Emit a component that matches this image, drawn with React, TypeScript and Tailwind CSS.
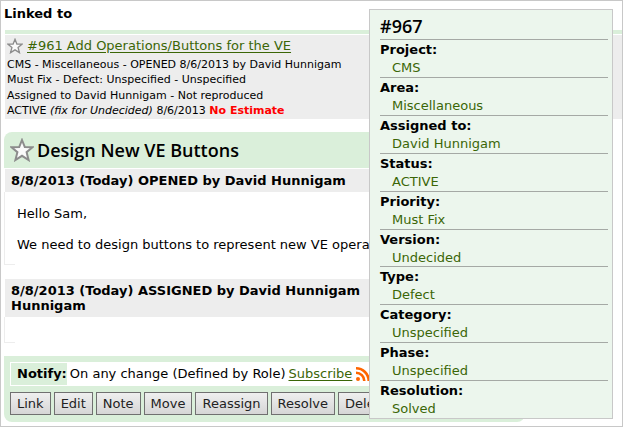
import type { ReactNode } from 'react';

const details = [
  { label: 'Project', value: 'CMS' },
  { label: 'Area', value: 'Miscellaneous' },
  { label: 'Assigned to', value: 'David Hunnigam' },
  { label: 'Status', value: 'ACTIVE' },
  { label: 'Priority', value: 'Must Fix' },
  { label: 'Version', value: 'Undecided' },
  { label: 'Type', value: 'Defect' },
  { label: 'Category', value: 'Unspecified' },
  { label: 'Phase', value: 'Unspecified' },
  { label: 'Resolution', value: 'Solved' },
];

const actions = ['Link', 'Edit', 'Note', 'Move', 'Reassign', 'Resolve', 'Delete'];

const Star = ({ className }: { className: string }) => (
  <svg viewBox="0 0 24 24" className={className} fill="#fafafa" stroke="#8c8c8c" strokeWidth="2" aria-hidden="true">
    <path d="M12 2 L14.8 9 L22.5 9.3 L16.6 14.2 L18.6 22 L12 17.8 L5.4 22 L7.4 14.2 L1.5 9.3 L9.2 9 Z" />
  </svg>
);

const Rss = () => (
  <svg viewBox="0 0 14 14" className="size-3.5 shrink-0" fill="none" stroke="#ff6600" aria-hidden="true">
    <circle cx="2" cy="12" r="2" fill="#ff6600" stroke="none" />
    <path d="M0 5.7 A8.3 8.3 0 0 1 8.3 14" strokeWidth="2.6" />
    <path d="M0 1.3 A12.7 12.7 0 0 1 12.7 14" strokeWidth="2.6" />
  </svg>
);

const Event = ({ title, children }: { title: ReactNode; children?: ReactNode }) => (
  <article>
    <h3 className="ml-px bg-[#ededed] px-1.5 py-1 text-[13px] leading-[15px] font-bold">{title}</h3>
    <div className="min-h-[25px] border-l border-[#ededed] px-3">{children}</div>
    <div className="h-px w-[11px] bg-[#ededed]" />
  </article>
);

const LinkedCase = () => (
  <section>
    <h2 className="px-[3px] pt-[5px] text-[13px] leading-4 font-bold">Linked to</h2>
    <div className="mt-2 ml-1 h-1 bg-[#daefda]" />
    <div className="mt-px ml-1 bg-[#ededed] px-0.5 pt-[3px] pb-px text-[11px] leading-[15px]">
      <div className="mb-[3px] flex items-center gap-1">
        <Star className="size-4 shrink-0" />
        <a href="#961" className="text-[13px] leading-4 text-[#3b6607] underline underline-offset-2">
          #961 Add Operations/Buttons for the VE
        </a>
      </div>
      <p>CMS - Miscellaneous - OPENED 8/6/2013 by David Hunnigam</p>
      <p>Must Fix - Defect: Unspecified - Unspecified</p>
      <p className="pt-px">Assigned to David Hunnigam - Not reproduced</p>
      <p>
        ACTIVE <i>(fix for Undecided)</i> 8/6/2013 <b className="text-[#ff0000]">No Estimate</b>
      </p>
    </div>
  </section>
);

const CaseDetails = () => (
  <aside className="absolute top-2 right-[9px] bottom-[7px] flex w-[244px] flex-col border border-[#c8c8c8] bg-[#ecf6ed] pr-1 pl-2.5 text-[13px]">
    <h2 className="pt-1 pb-px font-['Open_Sans',sans-serif] text-lg leading-6 font-semibold">#967</h2>
    <dl className="flex flex-1 flex-col">
      {details.map(({ label, value }) => (
        <div key={label} className="flex-1 border-t border-[#a5a9a5] pt-px leading-[17px]">
          <dt className="font-bold">{label}:</dt>
          <dd className="pt-px pl-3 text-[#3b6607]">{value}</dd>
        </div>
      ))}
    </dl>
  </aside>
);

export default function App() {
  return (
    <main className="relative min-h-screen overflow-hidden border border-[#c8c8c8] bg-white font-['Verdana','DejaVu_Sans',sans-serif] text-black">
      <LinkedCase />

      <section className="mt-[13px] ml-[3px] max-w-[521px]">
        <header className="mb-px flex h-9 items-center gap-[3px] rounded-t-lg bg-[#daefda] pl-1.5">
          <Star className="size-6 shrink-0" />
          <h2 className="font-['Open_Sans',sans-serif] text-lg leading-6 font-semibold">Design New VE Buttons</h2>
        </header>

        <Event title="8/8/2013 (Today) OPENED by David Hunnigam">
          <div className="space-y-4 pt-3.5 pb-3 text-[13px] leading-[15px]">
            <p>Hello Sam,</p>
            <p className="whitespace-nowrap">We need to design buttons to represent new VE operations.</p>
          </div>
        </Event>

        <div className="pt-3.5">
          <Event
            title={
              <>
                8/8/2013 (Today) ASSIGNED by David Hunnigam
                <br />
                Hunnigam
              </>
            }
          />
        </div>

        <footer className="mt-[13px] rounded-b-lg bg-[#daefda] px-1.5 pt-1.5 pb-[7px] text-[13px]">
          <div className="flex h-6 items-center border border-white bg-white leading-[22px]">
            <b className="bg-[#daefda] pl-1.5">Notify:</b>
            <span className="pl-[3px]">On any change (Defined by Role)</span>
            <a href="#subscribe" className="mr-1 ml-[3px] text-[#3b6607] underline underline-offset-2">
              Subscribe
            </a>
            <Rss />
          </div>
          <div className="mt-1.5 flex gap-[3px]">
            {actions.map((action) => (
              <button
                key={action}
                type="button"
                className="h-[23px] border border-[#707070] bg-linear-to-b from-[#efefef] to-[#d6d6d6] px-1.5 leading-5 text-[#222]"
              >
                {action}
              </button>
            ))}
          </div>
        </footer>
      </section>

      <CaseDetails />
    </main>
  );
}
